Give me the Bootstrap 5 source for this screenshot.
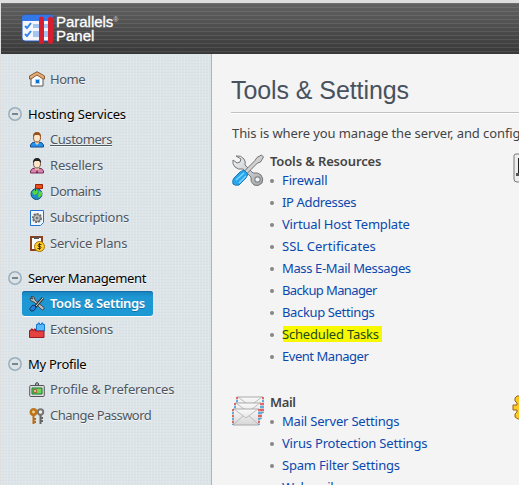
<!DOCTYPE html>
<html lang="en">
<head>
<meta charset="utf-8">
<meta name="viewport" content="width=device-width, initial-scale=1">
<title>Parallels Panel</title>
<link href="https://cdn.jsdelivr.net/npm/bootstrap@5.3.0/dist/css/bootstrap.min.css" rel="stylesheet">
<style>
html,body{height:100%;overflow:hidden}
body{font:13px/22px "Trebuchet MS","Noto Sans",sans-serif;color:#444;background:#f4f4f4}
.shell{height:485px;border-left:1px solid #dedede;overflow:hidden}
.topbar{height:54px;border-top:3px solid #dedede;background:repeating-linear-gradient(180deg,rgba(255,255,255,.09) 0 1px,transparent 1px 4px),linear-gradient(#626262,#383838);padding:11px 0 0 20px}
.brand{font:15px/14px "Liberation Sans",Arial,sans-serif;color:#fff;letter-spacing:-.02px;margin:1px 0 0 2px;-webkit-text-stroke:.3px #fff}
.brand .reg{font-size:7px;line-height:7px;margin-top:1px;letter-spacing:0;-webkit-text-stroke:0;color:#ccc}
.side{width:211px;border-right:1px solid #a9b5bd;padding-top:12px;background:repeating-linear-gradient(90deg,rgba(255,255,255,.14) 0 1px,transparent 1px 3px),repeating-linear-gradient(rgba(160,185,195,.08) 0 1px,transparent 1px 3px),#dde4e8}
.side-row{height:26px;padding:0 0 1px 28px;color:#4e5761;text-decoration:none;line-height:25px;text-shadow:0 1px #f4f7f8}
.side-row svg{width:16px;height:16px;margin-right:5px}
.side-row.first{margin-bottom:9px;padding-bottom:0}
.side-row.current{height:25px;width:131px;margin:0 0 1px 21px;padding:0 0 0 7px;background:linear-gradient(#1681bb,#1e97d3 25%,#1c99d4);border-radius:3px;color:#fff;font-weight:600;line-height:25px;box-shadow:0 1px #fff,inset 0 1px #146da8;text-shadow:0 1px #1870a5}
.group-title{height:26px;padding-left:7px;color:#000;line-height:26px;text-shadow:0 1px #f4f7f8}
.group-title svg{width:14px;height:14px;margin-right:6px}
.next{margin-top:8px}
.panel{padding:0 0 0 19px;min-width:0}
.panel h1{font:25px/40px "Liberation Sans",Arial,sans-serif;color:#47525e;margin:16px 0 0;height:42px;padding:0;letter-spacing:-.1px}
.rule{border-top:1px solid #bfc1c2;height:10px;box-shadow:inset 0 1px #fff}
.intro{height:22px;white-space:nowrap;padding-left:1px}
.tool-block{position:relative;height:241px;white-space:nowrap}
.tool-block h2{font-size:13px;line-height:17px;padding-top:1px;font-weight:600;margin:0;color:#444}
.tool-block ul{list-style:none;margin:-1px 0 0;padding:0 0 0 12px}
.tool-icon{width:32px;height:32px;margin:2px 6px 0 1px}
.tool-block li{height:22px;position:relative}
.tool-block li::before{content:"";position:absolute;left:-12px;top:10px;width:4px;height:4px;border-radius:50%;background:#858585}
.tool-block a{color:#0b49ae;text-decoration:none}
.tool-block .hot{background:#f8f800;color:#234b18;display:block;line-height:16px;width:99px;height:16px;margin-left:1px}
.tool-block .hot-row{padding-top:3px}
.hot .t{margin-left:-1px}
.edge{position:absolute;right:0;top:1px}
.t{display:inline-block;white-space:nowrap;letter-spacing:-.28px}
#title{letter-spacing:-.08px}
#intro{letter-spacing:-.1px}
#n1,#n2{letter-spacing:-.45px}
#n4{letter-spacing:-.55px}
#n3,#n6,#g1,#n9{letter-spacing:-.18px}
#g2,#n7{letter-spacing:-.38px}
#n10{letter-spacing:-.52px}
#h1{letter-spacing:-.14px}
#h2{letter-spacing:-.4px}
#a1{letter-spacing:-.12px}
#a2,#a7{letter-spacing:-.36px}
#a3,#b1,#b2,#b3,#a8{letter-spacing:-.19px}
#a4{letter-spacing:.05px}
#a5{letter-spacing:-.36px}
#a6{letter-spacing:-.62px}
#a9{letter-spacing:-.46px}
</style>
<script src="https://cdn.jsdelivr.net/npm/bootstrap@5.3.0/dist/js/bootstrap.bundle.min.js"></script>
</head>
<body>
<svg width="0" height="0" class="position-absolute">
<defs>
<linearGradient id="steel" x2="1" y2="1"><stop stop-color="#f5f5f5"/><stop offset="1" stop-color="#a4a7aa"/></linearGradient>
<linearGradient id="paper" x2="0" y2="1"><stop stop-color="#fafafa"/><stop offset="1" stop-color="#d6d6d6"/></linearGradient>
<symbol id="minus" viewBox="0 0 14 14"><circle cx="7" cy="7" r="6.2" fill="#dce3e7" stroke="#9caebb" stroke-width="1.5"/><path d="M4 7h6" stroke="#778791" stroke-width="2"/></symbol>
<symbol id="tools" viewBox="0 0 32 32"><path d="M4 2q5-1 8 3 2 3 1 6l8 8q5-1 8 2 3 4 1 8-4 4-8 2-4-3-3-8l-8-8q-5 1-8-2-3-3-2-7l4 3 3-1 1-3z" fill="url(#steel)" stroke="#74777a"/><circle cx="25.500" cy="25.500" r="2.700" fill="#f4f4f4" stroke="#85888a" stroke-width="1.200"/><path d="M29.500 1l2 2-3 5-3 1L15 19.500 12.500 17 23 6.500l2-3z" fill="#d0d0d0" stroke="#666" stroke-width=".9"/><path d="M12 16l4 4-2 4-7 7q-4 1-6-1-1-4 1-6l6-6z" fill="#28a7ef" stroke="#1c78b5"/><path d="M4 26l8-7M7 29l7-7" stroke="#84d5ff" stroke-width="1.300"/></symbol>
<symbol id="mail" viewBox="0 0 32 30"><g id="letter1" transform="translate(4 0)"><path d="M1 1h26v16H1z" fill="url(#paper)" stroke="#aaa"/><path d="M2 1l12 9L26 1" fill="none" stroke="#bbb"/><path d="M1 1v16M27 1v16" stroke="#e35653" stroke-width="1.700" stroke-dasharray="2 4"/><path d="M1 4v13M27 4v13" stroke="#4ea7e3" stroke-width="1.700" stroke-dasharray="2 4"/></g><use href="#letter1" x="-2" y="6"/><use href="#letter1" x="-4" y="12"/><path d="M2 28l9-8m15 8l-9-8" stroke="#bbb"/></symbol>
</defs></svg>
<div class="shell d-flex flex-column">
<header class="topbar d-flex flex-shrink-0 align-items-start">
<svg width="33" height="31" viewBox="0 0 33 31"><path d="M4 1h26q2 0 2 2v24H4q-3 0-3-3V4q0-3 3-3z" fill="#f4f6fb" stroke="#2459bd"/><path d="M1 7V4q0-3 3-3h26q2 0 2 2v4z" fill="#3378e6"/><path d="M4 12l2 2 4-5M4 20l2 2 4-5" fill="none" stroke="#3385e8" stroke-width="2"/><path d="M12 11h15M12 13h15M12 18h15M12 20h15M12 22h15" stroke="#4e96e8"/><path d="M20.500 5v22.500M29.500 5v22.500" stroke="#d71d2e" stroke-width="5" stroke-linecap="round"/></svg>
<div class="brand"><div class="d-flex align-items-start"><span>Parallels</span><span class="reg">®</span></div><div>Panel</div></div>
</header>
<div class="d-flex flex-grow-1">
<nav class="side flex-shrink-0">
<a class="side-row first d-flex align-items-center"><svg viewBox="0 0 16 16"><path d="M2 7v8h12V7L8 2z" fill="#fff" stroke="#555"/><path d="M.5 8V5L8 .7 15.500 5v3H14L8 4 2 8z" fill="#e2ae73" stroke="#8a5a33"/><path d="M6 8h5v5H6z" fill="#98d4ff"/><path d="M7 9h3v3H7z" fill="#096fd3"/></svg><span class="t" id="n1">Home</span></a>
<div class="group-title d-flex align-items-center"><svg><use href="#minus"/></svg><span class="t" id="g1">Hosting Services</span></div>
<a class="side-row d-flex align-items-center"><svg viewBox="0 0 16 16"><path d="M1.500 15v-2q1-3 5-3h3q4 0 5 3v2z" fill="#2491ef" stroke="#174d88"/><path d="M6 8h4v3l-2 2-2-2z" fill="#f6cfa5"/><ellipse cx="8" cy="5.500" rx="3.500" ry="4.500" fill="#ffe4c6" stroke="#85502b"/><path d="M4 5q0-5 4-5t4 5l-2-2H6z" fill="#9a501c"/></svg><span class="t text-decoration-underline" id="n2">Customers</span></a>
<a class="side-row d-flex align-items-center"><svg viewBox="0 0 16 16"><path d="M1.500 15v-2q1-3 5-3h3q4 0 5 3v2z" fill="#dc83b4" stroke="#743257"/><path d="M6 8h4v3l-2 2-2-2z" fill="#f6cfa5"/><ellipse cx="8" cy="5.500" rx="3.500" ry="4.500" fill="#ffe4c6" stroke="#665047"/><path d="M4 5q0-5 4-5t4 5l-2-2H6z" fill="#222"/><path d="M8 11l1 4H7z" fill="#681847"/></svg><span class="t" id="n3">Resellers</span></a>
<a class="side-row d-flex align-items-center"><svg viewBox="0 0 16 16"><circle cx="7.500" cy="10" r="5.500" fill="#208dc7" stroke="#185478"/><path d="M3 8l4-3 2 2-1 3-3 1zM10 7l3 1v3l-3 3-1-2z" fill="#58d738"/><path d="M6.500 7V.5h7v4h-7" fill="#e95019" stroke="#9d2104"/></svg><span class="t" id="n4">Domains</span></a>
<a class="side-row d-flex align-items-center"><svg viewBox="0 0 16 16"><path d="M1.500.5h13v12l-3 3h-10z" fill="#f1f7ff" stroke="#2573ce"/><circle cx="8" cy="8" r="4" fill="#ccc" stroke="#666" stroke-width="2" stroke-dasharray="2 1"/><circle cx="8" cy="8" r="3.300" fill="#ccc" stroke="#777"/><circle cx="8" cy="8" r="1" fill="#fff" stroke="#555"/></svg><span class="t" id="n5">Subscriptions</span></a>
<a class="side-row d-flex align-items-center"><svg viewBox="0 0 16 16"><path d="M2 1h11v13H2z" fill="#fff" stroke="#8b431d" stroke-width="2"/><path d="M5 2h5" stroke="#555" stroke-width="2"/><circle cx="10.500" cy="10.500" r="5" fill="#ffcf2d" stroke="#a47412"/><path d="M12.500 8.500H9.500q-1 1 0 2h2q1 1 0 2H8.500M10.500 7v7" fill="none" stroke="#4c3507"/></svg><span class="t" id="n6">Service Plans</span></a>
<div class="group-title next d-flex align-items-center"><svg><use href="#minus"/></svg><span class="t" id="g2">Server Management</span></div>
<a class="side-row current d-flex align-items-center"><svg viewBox="0 0 16 16"><path d="M1 2q0 4 4 4l7 7q2 2 3 0t-2-3L6 4Q6 0 2 0l2 3z" fill="#b9bbbc" stroke="#333" stroke-width=".8"/><path d="M14 2L6 11" stroke="#333" stroke-width="3"/><path d="M14 2L7 10" stroke="#ddd"/><path d="M4 9q3 0 3 3-2 4-5 3-3-2 2-6z" fill="#267edc" stroke="#103960"/></svg><span class="t" id="n7">Tools &amp; Settings</span></a>
<a class="side-row d-flex align-items-center"><svg viewBox="0 0 16 16"><path d="M7.500 8V2.500H9V1h1.500v1.500h2V1H14v1.500h1.500V9h-8z" fill="#58bafa" stroke="#1679ce"/><path d="M.5 15.500v-7H2V7h1.500v1.500H5V7h1.500v2h8.500v6.500z" fill="#e44040" stroke="#991a20"/></svg><span class="t" id="n8">Extensions</span></a>
<div class="group-title next d-flex align-items-center"><svg><use href="#minus"/></svg><span class="t" id="g3">My Profile</span></div>
<a class="side-row d-flex align-items-center"><svg viewBox="0 0 16 16"><path d="M6.500 3V1.500L8 .5l1.500 1V3" fill="#aaa" stroke="#444"/><rect x=".7" y="3.500" width="14.600" height="11" rx="1" fill="#ddd" stroke="#555"/><path d="M3 6h10v6H3z" fill="#71d64d" stroke="#147638"/><path d="M4 7h4v4H4z" fill="#a9684b"/><circle cx="6" cy="9" r="1" fill="#ffcab0"/></svg><span class="t" id="n9">Profile &amp; Preferences</span></a>
<a class="side-row d-flex align-items-center"><svg viewBox="0 0 16 16"><circle cx="11.500" cy="4" r="2.700" fill="#eee" stroke="#777" stroke-width="2"/><path d="M11.500 7v9M12 10h2M12 13h2" stroke="#666" stroke-width="2"/><circle cx="4.500" cy="4" r="2.700" fill="#eed094" stroke="#bd741b" stroke-width="2.500"/><path d="M4.500 7v9M5 11h2M5 14h2" stroke="#b96c15" stroke-width="2"/></svg><span class="t" id="n10">Change Password</span></a>
</nav>
<main class="panel flex-grow-1 overflow-hidden">
<h1><span class="t" id="title">Tools &amp; Settings</span></h1>
<div class="rule"></div>
<p class="intro mb-0"><span class="t" id="intro">This is where you manage the server, and configure its services.</span></p>
<div class="pt-2"></div>
<section class="tool-block d-flex align-items-start">
<svg class="tool-icon flex-shrink-0"><use href="#tools"/></svg>
<div><h2><span class="t" id="h1">Tools &amp; Resources</span></h2><ul>
<li><a class="t" id="a1">Firewall</a></li><li><a class="t" id="a2">IP Addresses</a></li><li><a class="t" id="a3">Virtual Host Template</a></li><li><a class="t" id="a4">SSL Certificates</a></li><li><a class="t" id="a5">Mass E-Mail Messages</a></li><li><a class="t" id="a6">Backup Manager</a></li><li><a class="t" id="a7">Backup Settings</a></li><li class="hot-row"><a class="hot"><span class="t" id="a8">Scheduled Tasks</span></a></li><li><a class="t" id="a9">Event Manager</a></li></ul></div>
<svg class="edge" width="6" height="31" viewBox="0 0 6 31"><path d="M7 1H3Q1 1 1 3v23q0 3 3 3h3" fill="#eee" stroke="#777"/><path d="M6 5v15" stroke="#222" stroke-width="2"/><path d="M3 20h3v3H3z" fill="#555"/></svg>
</section>
<section class="tool-block d-flex align-items-start">
<svg class="tool-icon flex-shrink-0"><use href="#mail"/></svg>
<div><h2><span class="t" id="h2">Mail</span></h2><ul><li><a class="t" id="b1">Mail Server Settings</a></li><li><a class="t" id="b2">Virus Protection Settings</a></li><li><a class="t" id="b3">Spam Filter Settings</a></li><li><a class="t" id="b4">Webmail</a></li></ul></div>
<svg class="edge" width="7" height="26" viewBox="0 0 7 26"><path d="M8 2H5L3 4v3l2 2v2H1v5h4v2l-2 2v3l3 2h2" fill="#ffc922" stroke="#94631b"/></svg>
</section>
</main>
</div>
</div>
</body>
</html>
